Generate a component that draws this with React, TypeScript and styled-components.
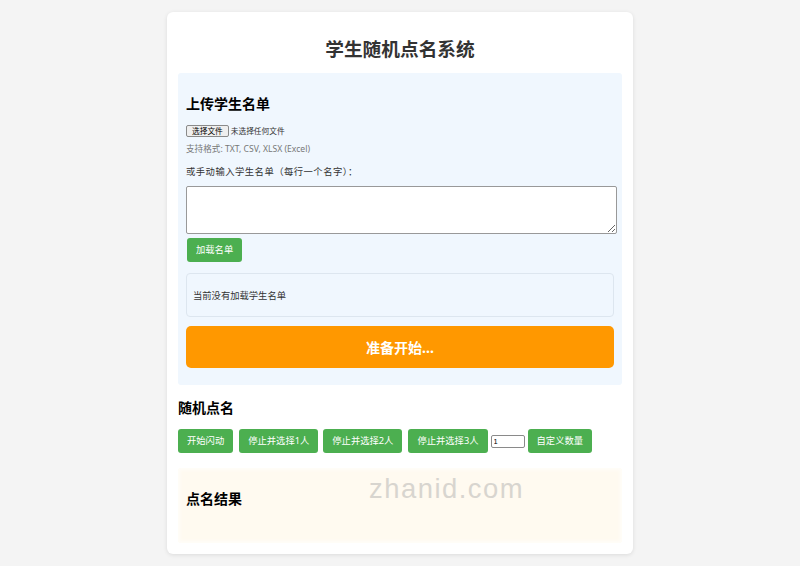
import React from "react";
import styled, { createGlobalStyle } from "styled-components";

const Global = createGlobalStyle`
  html, body { margin: 0; padding: 0; }
  body {
    background: #f4f4f4;
    font-family: "Noto Sans", "Noto Sans CJK SC", sans-serif;
    color: #333;
  }
  #root { padding: 12px 0 13px; }
`;

const Card = styled.div`
  width: 466px;
  margin: 0 auto;
  box-sizing: border-box;
  background: #fff;
  border-radius: 6px;
  box-shadow: 0 1px 4px rgba(0, 0, 0, 0.1);
  padding: 0 11px 11px;
  display: flex;
  flex-direction: column;
`;

const Title = styled.h1`
  margin: 26px 0 13px;
  font-size: 18.7px;
  line-height: 22px;
  font-weight: 700;
  text-align: center;
  color: #333;
`;

const Section = styled.section<{ $tone: "blue" | "cream" }>`
  position: relative;
  background: ${(p) => (p.$tone === "blue" ? "#f0f7fe" : "#fffaf0")};
  ${(p) => (p.$tone === "cream" ? "box-shadow: inset 0 0 3px 2px #fffdf9;" : "")}
  border-radius: 3px;
  padding: 8px 8px ${(p) => (p.$tone === "blue" ? "17px" : "23px")};
  display: flex;
  flex-direction: column;
  align-items: flex-start;
`;

const SubHeading = styled.h3`
  margin: 14px 0 13px;
  font-size: 14px;
  line-height: 17px;
  font-weight: 700;
  color: #000;
`;

const FileRow = styled.div`
  display: flex;
  align-items: center;
  gap: 2px;
  height: 12px;
  font-size: 7.7px;
  line-height: 10px;
  color: #333;
`;

const FileButton = styled.span`
  display: inline-block;
  box-sizing: border-box;
  height: 12px;
  padding: 0 5px;
  background: #efefef;
  border: 1px solid #8a8a8a;
  border-radius: 2px;
  color: #000;
  font-size: 7.7px;
  line-height: 10px;
`;

const Hint = styled.p`
  margin: 6px 0 0;
  font-size: 8.6px;
  line-height: 12px;
  color: #777;
`;

const Label = styled.label`
  margin: 10px 0 0;
  font-size: 9.3px;
  line-height: 14px;
  letter-spacing: 0.5px;
  color: #333;
`;

const TextArea = styled.textarea`
  margin-top: 7px;
  box-sizing: border-box;
  width: calc(100% + 3px);
  height: 48px;
  border: 1px solid #999;
  border-radius: 2px;
  background: #fff;
  padding: 2px;
  font-family: inherit;
  font-size: 9px;
`;

const GreenButton = styled.button<{ $gap?: number }>`
  box-sizing: border-box;
  height: 24px;
  padding: 0 9px;
  margin-right: ${(p) => p.$gap ?? 0}px;
  border: none;
  border-radius: 3px;
  background: #4caf50;
  color: #fff;
  font-family: inherit;
  font-size: 9.3px;
  line-height: 24px;
  white-space: nowrap;
  cursor: pointer;
`;

const LoadButton = styled(GreenButton)`
  margin: 4px 0 0 1px;
`;

const Status = styled.div`
  margin-top: 11px;
  box-sizing: border-box;
  align-self: stretch;
  height: 44px;
  display: flex;
  align-items: center;
  padding: 0 6px;
  background: #f0f7fe;
  border: 1px solid #dde6ef;
  border-radius: 4px;
  font-size: 9.3px;
  color: #333;
`;

const BigButton = styled.div`
  margin-top: 9px;
  align-self: stretch;
  height: 42px;
  display: flex;
  align-items: center;
  justify-content: center;
  background: #ff9800;
  border-radius: 5px;
  color: #fff;
  font-size: 14px;
  font-weight: 700;
`;

const ButtonRow = styled.div`
  display: flex;
  align-items: center;
`;

const NumberInput = styled.input`
  box-sizing: border-box;
  width: 34px;
  height: 13px;
  margin: 0 3px 0 3px;
  padding: 0 2px;
  border: 1px solid #8a8a8a;
  border-radius: 2px;
  font-size: 7.5px;
  font-family: "Liberation Sans", sans-serif;
  &::-webkit-inner-spin-button { display: none; }
`;

const ResultWrap = styled.div`
  margin-top: 15px;
  display: flex;
  flex-direction: column;
`;

const Watermark = styled.div`
  position: absolute;
  left: 191px;
  top: 7px;
  font-family: "Liberation Sans", Arial, sans-serif;
  font-size: 27.4px;
  line-height: 27px;
  letter-spacing: 1.5px;
  color: #d8d5cf;
  pointer-events: none;
`;

export default function App() {
  return (
    <>
      <Global />
      <Card>
        <Title>学生随机点名系统</Title>
        <Section $tone="blue">
          <SubHeading>上传学生名单</SubHeading>
          <FileRow>
            <FileButton>选择文件</FileButton>
            <span>未选择任何文件</span>
          </FileRow>
          <Hint>支持格式: TXT, CSV, XLSX (Excel)</Hint>
          <Label>或手动输入学生名单（每行一个名字）：</Label>
          <TextArea />
          <LoadButton>加载名单</LoadButton>
          <Status>当前没有加载学生名单</Status>
          <BigButton>准备开始...</BigButton>
        </Section>
        <SubHeading>随机点名</SubHeading>
        <ButtonRow>
          <GreenButton $gap={6}>开始闪动</GreenButton>
          <GreenButton $gap={5}>停止并选择1人</GreenButton>
          <GreenButton $gap={6}>停止并选择2人</GreenButton>
          <GreenButton>停止并选择3人</GreenButton>
          <NumberInput type="number" defaultValue={1} />
          <GreenButton>自定义数量</GreenButton>
        </ButtonRow>
        <ResultWrap>
          <Section $tone="cream">
            <SubHeading>点名结果</SubHeading>
            <Watermark>zhanid.com</Watermark>
          </Section>
        </ResultWrap>
      </Card>
    </>
  );
}
